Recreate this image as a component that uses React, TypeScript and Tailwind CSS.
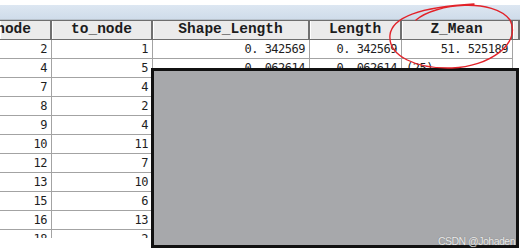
import React from "react";

const rows = [
  { from: "2", to: "1", shape: "0. 342569", len: "0. 342569", z: "51. 525189" },
  { from: "4", to: "5", shape: "0. 062614", len: "0. 062614", z: "(25)" },
  { from: "7", to: "4", shape: "", len: "", z: "" },
  { from: "8", to: "2", shape: "", len: "", z: "" },
  { from: "9", to: "4", shape: "", len: "", z: "" },
  { from: "10", to: "11", shape: "", len: "", z: "" },
  { from: "12", to: "7", shape: "", len: "", z: "" },
  { from: "13", to: "10", shape: "", len: "", z: "" },
  { from: "15", to: "6", shape: "", len: "", z: "" },
  { from: "16", to: "13", shape: "", len: "", z: "" },
  { from: "18", to: "2", shape: "", len: "", z: "" },
];

const headers = ["from_node", "to_node", "Shape_Length", "Length", "Z_Mean", ""];

function Cell({ children, left }: { children?: React.ReactNode; left?: boolean }) {
  return (
    <div
      className={
        "h-[19px] border-b border-r border-[#a3a3a3] flex items-center px-[4px] overflow-hidden whitespace-nowrap " +
        (left ? "justify-start" : "justify-end")
      }
    >
      {children}
    </div>
  );
}

export default function App() {
  return (
    <div className="relative w-[520px] h-[250px] bg-white overflow-hidden">
      <div className="h-[5px] bg-white" />
      <div className="h-[15px] bg-gradient-to-b from-[#dde7f2] to-[#cfdcea] border-b border-[#b8c2cc]" />

      <div className="h-[218px] overflow-hidden">
        {/* header */}
        <div className="grid grid-cols-[52px_101px_157px_92px_111px_1fr] h-[20px] bg-[#ebebeb] border-t border-b border-[#6e6e6e] font-['Liberation_Mono',monospace] font-bold text-[14.5px] text-[#1c1c1c]">
          {headers.map((h, i) => (
            <div
              key={i}
              className={
                "flex items-center overflow-hidden whitespace-nowrap border-r-2 border-[#707070] shadow-[inset_1px_0_0_#ffffff] " +
                (i === 0 ? "justify-end pr-[19px]" : "justify-center")
              }
            >
              {h}
            </div>
          ))}
        </div>

        {/* rows */}
        <div className="grid grid-cols-[52px_101px_157px_92px_111px_1fr] font-['DejaVu_Sans_Mono',monospace] text-[12px] tracking-[-0.5px] text-[#1e1e1e]">
          {rows.map((r, i) => (
            <React.Fragment key={i}>
              <Cell>{r.from}</Cell>
              <Cell>{r.to}</Cell>
              <Cell>{r.shape}</Cell>
              <Cell>{r.len}</Cell>
              <Cell left={r.z === "(25)"}>{r.z}</Cell>
              <div className="h-[19px]" />
            </React.Fragment>
          ))}
        </div>
      </div>

      {/* grey cover box */}
      <div className="absolute left-[151px] top-[68px] w-[368px] h-[180px] bg-[#a7a8ab] border-[3px] border-[#111111]" />

      {/* red hand-drawn circle */}
      <svg className="absolute left-0 top-0" width="520" height="250" viewBox="0 0 520 250">
        <path
          d="M 416 20 C 436 3 494 -2 510 20 C 522 44 488 67 452 68 C 416 69 388 56 390 35 C 392 17 420 7 474 4"
          fill="none"
          stroke="#e2232a"
          strokeWidth="1.4"
          strokeLinecap="round"
        />
      </svg>

      <div className="absolute right-[5px] top-[234px] whitespace-nowrap font-['Liberation_Sans',sans-serif] text-[10.5px] tracking-[-0.5px] text-[#ececec] [text-shadow:0_0_1px_#666]">
        CSDN @Johaden
      </div>
    </div>
  );
}
